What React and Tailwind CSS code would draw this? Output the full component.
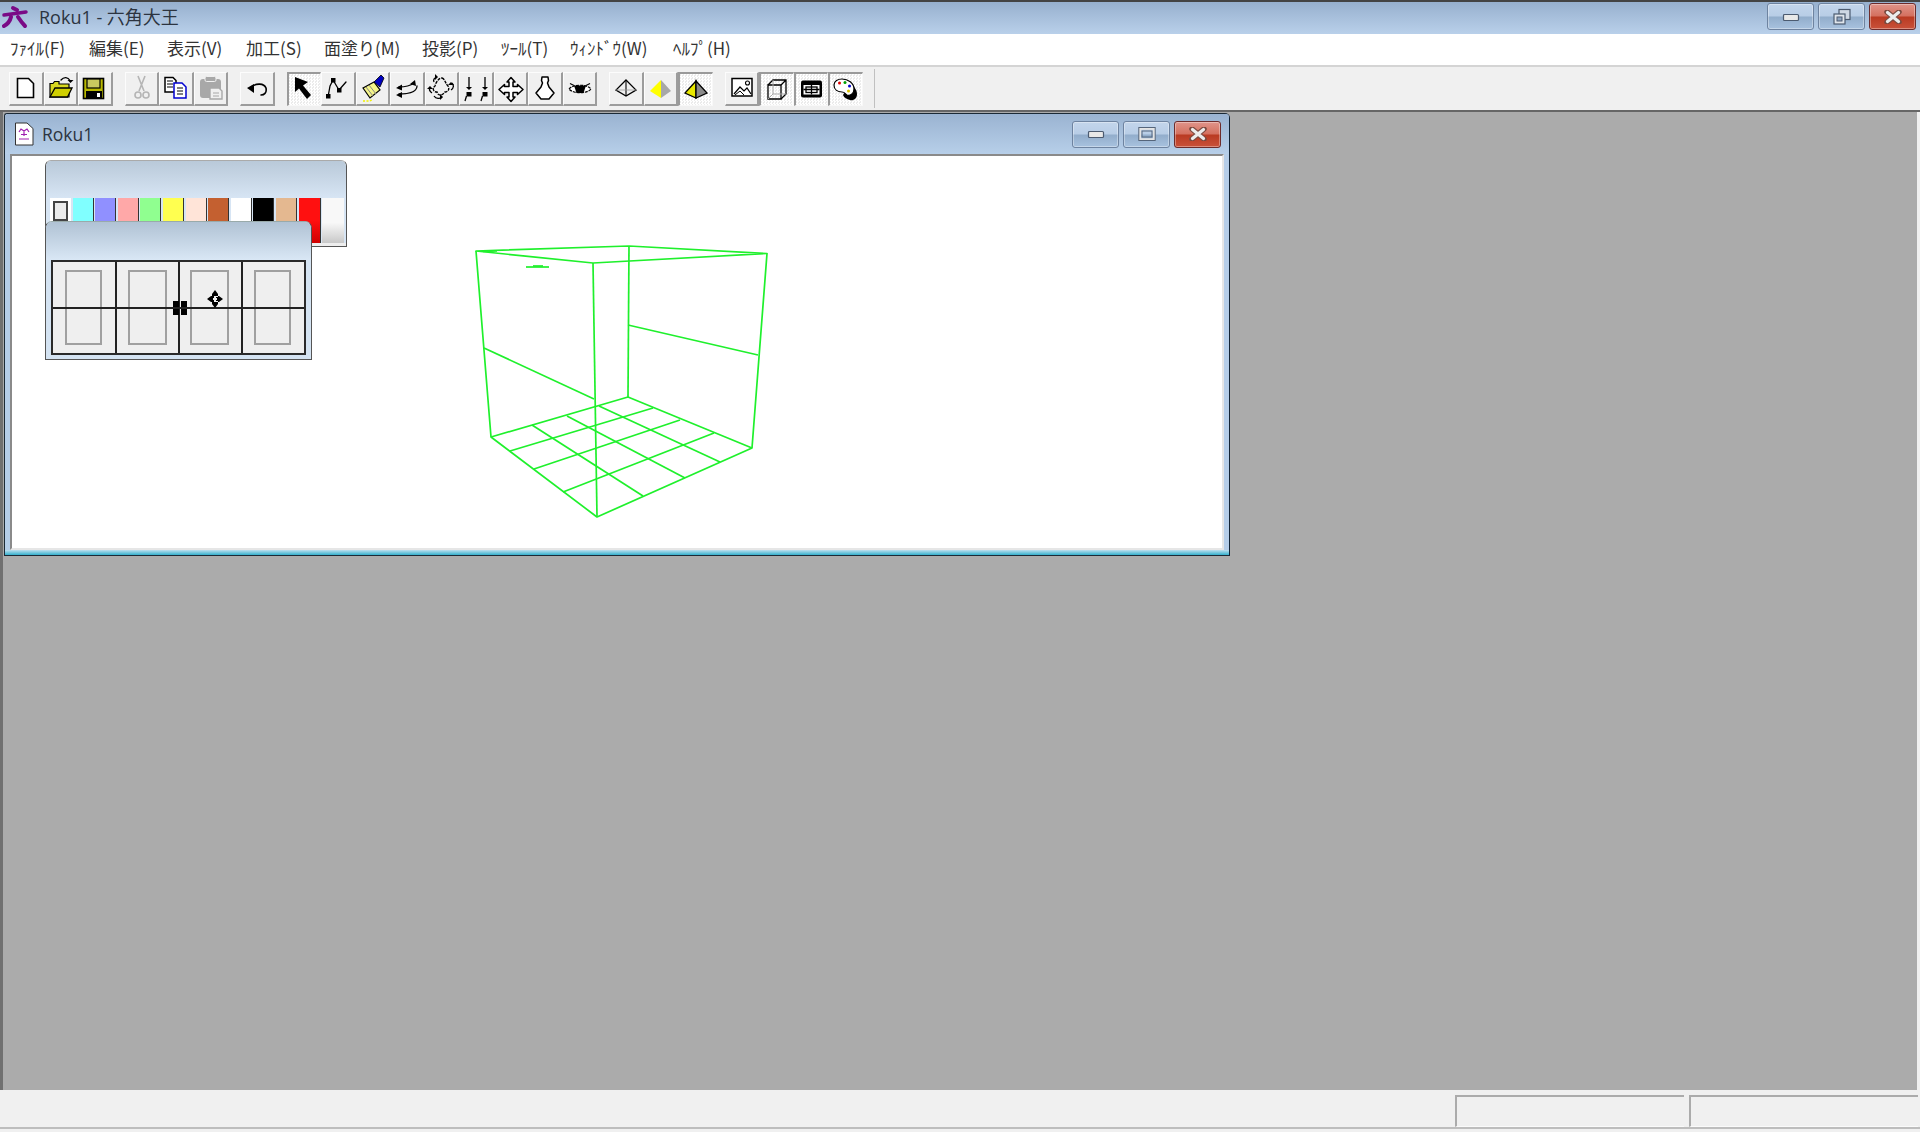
const K = { fill: "none", stroke: "#000", strokeWidth: 1.6, strokeLinejoin: "round", strokeLinecap: "round" };

function ArrowHead({ x, y, d = "d" }) {
  const p = { d: `M${x - 3} ${y - 3}L${x} ${y}L${x + 3} ${y - 3}Z`, u: `M${x - 3} ${y + 3}L${x} ${y}L${x + 3} ${y + 3}Z`, l: `M${x + 3} ${y - 3}L${x} ${y}L${x + 3} ${y + 3}Z`, r: `M${x - 3} ${y - 3}L${x} ${y}L${x - 3} ${y + 3}Z` }[d];
  return <path d={p} fill="#000" />;
}

const icons = {
  newDoc: <path d="M8.5 5.5H19.5L24.5 10.5V24.5H8.5Z" fill="#fff" stroke="#000" strokeWidth="1.6" />,
  open: (
    <>
      <path d="M6 24V10.5H9L10.5 8.5H15V11H25V24Z" fill="#d8d820" stroke="#000" strokeWidth="1.2" />
      <path d="M6 24L11 15H28L23.5 24Z" fill="#cfcf00" stroke="#000" strokeWidth="1.3" />
      <path d="M17 7C20 3.5 24 4 26 7.5" {...K} strokeWidth="1.3" />
      <ArrowHead x={26.5} y={10} />
    </>
  ),
  save: (
    <>
      <rect x="5.5" y="5.5" width="20" height="20" fill="#b8b800" stroke="#000" strokeWidth="1.6" />
      <rect x="9" y="6" width="13" height="9" fill="#c8c860" stroke="#000" strokeWidth="1.2" />
      <rect x="8" y="18" width="16" height="7.5" fill="#000" />
      <rect x="19" y="20" width="3" height="4" fill="#fff" />
    </>
  ),
  cut: (
    <g fill="none" stroke="#b5b5b5" strokeWidth="1.6">
      <path d="M13 3L19 18M20 3L14 18" />
      <circle cx="13" cy="22" r="3" />
      <circle cx="21" cy="22" r="3" />
    </g>
  ),
  copy: (
    <>
      <path d="M6 4.5H14L17 7.5V19H6Z" fill="#fff" stroke="#000" strokeWidth="1.5" />
      <path d="M8 8H14M8 11H14M8 14H14" stroke="#000" strokeWidth="1" />
      <path d="M15 10H23L27 14V25H15Z" fill="#fff" stroke="#0000d0" strokeWidth="1.5" />
      <path d="M18 15H24M18 18H24M18 21H24" stroke="#000" strokeWidth="1" />
    </>
  ),
  paste: (
    <>
      <rect x="6" y="6" width="21" height="19" rx="3" fill="#a8a8a8" />
      <rect x="11" y="3.5" width="11" height="5" rx="1.5" fill="#a8a8a8" stroke="#f0f0f0" strokeWidth="1" />
      <path d="M16 15H25L28 18V26H16Z" fill="#f0f0f0" stroke="#a8a8a8" strokeWidth="1.4" />
      <path d="M19 20H25M19 23H25" stroke="#a8a8a8" strokeWidth="1" />
    </>
  ),
  undo: (
    <>
      <path d="M11 14C16 10 24 10 26 15C27 20 24 22 21 22" {...K} strokeWidth="1.6" />
      <path d="M7 15L14 11V20Z" fill="#000" />
    </>
  ),
  arrow: <path d="M7 3L7 18L11 14.500L19 25L23 21L15 11.500L20 8Z" fill="#000" />,
  path: (
    <>
      <path d="M7 24L9 13L12 7L18 17L25 9" {...K} strokeWidth="1.3" />
      <rect x="5" y="21" width="4.5" height="4.5" fill="#000" />
      <rect x="10" y="5" width="4.5" height="4.5" fill="#000" />
      <rect x="16" y="15" width="4.5" height="4.5" fill="#000" />
    </>
  ),
  brush: (
    <>
      <path d="M7 15L18 9L24 17L14 25Z" fill="#f4f48a" stroke="#000" strokeWidth="1.200" />
      <path d="M10 14L17 23M13 12L20 21" stroke="#888" strokeWidth="1" />
      <path d="M18 9L25 2L28 5L24 14Z" fill="#0000c0" stroke="#000" strokeWidth="0.8" />
      <path d="M7 28H14M14 28L17 26" stroke="#f0f000" strokeWidth="1.4" strokeDasharray="2 1.5" />
    </>
  ),
  swap: (
    <>
      <path d="M9 14C14 14 20 13 24 10" {...K} strokeWidth="1.3" />
      <path d="M9 21C16 21 27 20 27 13" {...K} strokeWidth="1.3" />
      <path d="M6 15L12 11.500L12 17.500Z M25 7L26 13L20 11Z M6 22L12 19L12 25Z" fill="#000" />
    </>
  ),
  rotate: (
    <>
      <path d="M17 5C20 6 20 10 23 13C25 16 23 19 20 19C17 23 13 23 12 19C8 19 7 15 10 13C11 9 14 5 17 5Z" fill="none" stroke="#000" strokeWidth="1.400" strokeDasharray="3 1" />
      <path d="M9 9C8 7 9 5 12 4M26 17C29 15 29 12 27 10M9 23C11 26 15 26 17 24M7 20C4 18 4 16 5 14" fill="none" stroke="#000" strokeWidth="1.300" />
      <ArrowHead x={13} y={4} d="r" />
      <ArrowHead x={26} y={9} d="u" />
      <ArrowHead x={18} y={24} d="r" />
      <ArrowHead x={5} y={13} d="u" />
    </>
  ),
  twist: (
    <>
      <path d="M10 4V15M26 4V15" stroke="#000" strokeWidth="1.3" />
      <ArrowHead x={10} y={17} />
      <ArrowHead x={26} y={17} />
      <rect x="7.500" y="19" width="5" height="4.500" fill="#000" />
      <rect x="23.500" y="19" width="5" height="4.500" fill="#000" />
      <path d="M7.500 23L6 28M23.500 23L22 28" stroke="#000" strokeWidth="1.3" />
    </>
  ),
  move: <path d="M17 4.500L21 9H19V13.500H23.500V11.500L29 16.500L23.500 21.500V19.500H19V24H21L17 28.500L13 24H15V19.500H10.500V21.500L5 16.500L10.500 11.500V13.500H15V9H13Z" fill="#fff" stroke="#000" strokeWidth="1.500" strokeLinejoin="round" />,
  pear: <path d="M14 4H20L20.500 7.500L19.500 10L21 14L26 20L21 26H13L8 20L13 14L14.500 10L13.500 7.500Z" fill="#fff" stroke="#000" strokeWidth="1.500" strokeLinejoin="round" />,
  eye: (
    <>
      <path d="M6 16C10 11 24 11 28 16C24 21 10 21 6 16Z" fill="#fff" stroke="#000" strokeWidth="1.200" strokeDasharray="3 1" />
      <path d="M11 12.500H23L20.500 20H13.500Z" fill="#000" />
      <path d="M7 10.500L11 12.500M27 10.500L23 12.500" stroke="#000" strokeWidth="1.200" />
    </>
  ),
  pyrWire: (
    <>
      <path d="M17 7L27 17L17 23L7 17Z" fill="none" stroke="#000" strokeWidth="1.300" />
      <path d="M17 7V23" stroke="#000" strokeWidth="1.100" />
      <path d="M7 17L27 17" stroke="#999" strokeWidth="0.8" />
    </>
  ),
  pyrSolid: (
    <>
      <path d="M17 7L6 18L17 25Z" fill="#ffff00" />
      <path d="M17 7L27 18L17 25Z" fill="#a8a8a8" />
    </>
  ),
  pyrOutline: (
    <>
      <path d="M17 7L6 19L17 24Z" fill="#e8e800" stroke="#000" strokeWidth="1.300" />
      <path d="M17 7L28 19L17 24Z" fill="#8a8a8a" stroke="#000" strokeWidth="1.300" />
    </>
  ),
  image: (
    <>
      <rect x="7" y="5.5" width="20" height="17.500" fill="#fff" stroke="#000" strokeWidth="1.500" />
      <path d="M9 21L15 14L19 18L22 15L26 21" fill="none" stroke="#000" strokeWidth="1.200" />
      <path d="M10 22L15 18L19 22" fill="none" stroke="#000" strokeWidth="1" />
      <circle cx="22.500" cy="10" r="2" fill="none" stroke="#000" strokeWidth="1.100" />
    </>
  ),
  cube: (
    <>
      <path d="M8 11H21V25H8Z" fill="none" stroke="#000" strokeWidth="1.300" />
      <path d="M8 11L13 6H26V20L21 25M21 11L26 6" fill="none" stroke="#000" strokeWidth="1.300" />
      <path d="M13 6V20H26M13 20L8 25" fill="none" stroke="#aaa" strokeWidth="1" />
    </>
  ),
  table: (
    <>
      <rect x="6" y="6.500" width="21" height="17" rx="2" fill="#000" />
      <rect x="8.500" y="11" width="16" height="9.500" fill="#fff" />
      <rect x="11" y="13" width="11" height="5.500" fill="none" stroke="#000" strokeWidth="1.300" />
      <path d="M16.500 11V20.500M8.500 15.500H24.500" stroke="#000" strokeWidth="1.300" />
    </>
  ),
  palette: (
    <>
      <path d="M20 10C24 11 28 15 28 20C28 25 24 27 21 26C18 25 15 24 14 21Z" fill="#000" />
      <path d="M13 5C19 5 25 9 25 15C25 20 21 22 18 21C16 20 16 18 13 18C9 18 5 16 5 11C5 7 9 5 13 5Z" fill="#fff" stroke="#000" strokeWidth="1.200" />
      <circle cx="10.500" cy="9" r="1.500" fill="#e00000" />
      <circle cx="16" cy="8.500" r="1.500" fill="#00a000" />
      <circle cx="20.500" cy="12" r="1.500" fill="#0000d0" />
      <circle cx="19.500" cy="17" r="1.500" fill="#d8c000" />
    </>
  ),
};

const toolbar = [
  [["newDoc"], ["open"], ["save"]],
  [["cut"], ["copy"], ["paste"]],
  [["undo"]],
  [["arrow", 1], ["path"], ["brush"], ["swap"], ["rotate"], ["twist"], ["move"], ["pear"], ["eye"]],
  [["pyrWire"], ["pyrSolid"], ["pyrOutline", 1]],
  [["image"], ["cube", 1], ["table", 1], ["palette", 1]],
];

function ToolButton({ name, pressed }) {
  const cls = pressed
    ? "border-t-2 border-l-2 border-t-[#9a9a9a] border-l-[#9a9a9a] border-b-[#f8f8f8] border-r-[#f8f8f8] border-b border-r bg-[repeating-conic-gradient(#ffffff_0_25%,#ebebeb_0_50%)] bg-[length:3px_3px]"
    : "border-b-2 border-r-2 border-t border-l border-t-[#fcfcfc] border-l-[#fcfcfc] border-b-[#9c9c9c] border-r-[#9c9c9c] bg-[#f0f0f0]";
  return (
    <div className={`w-[34.5px] h-[34px] box-border relative ${cls}`}>
      <svg viewBox="0 0 34 33" className="absolute left-[-1px] top-0 w-[34px] h-[33px]">
        {icons[name]}
      </svg>
    </div>
  );
}

function Glyph({ type }) {
  if (type === "min")
    return (
      <svg width="20" height="10" viewBox="0 0 20 10">
        <rect x="2.500" y="2.500" width="15" height="6" rx="1" fill="#e8e8e8" stroke="#4c5b70" strokeWidth="1.200" />
      </svg>
    );
  if (type === "max")
    return (
      <svg width="18" height="14" viewBox="0 0 18 14">
        <rect x="2" y="1.500" width="14" height="11" fill="none" stroke="#e4e4e4" strokeWidth="2.500" />
        <rect x="0.800" y="0.500" width="16.400" height="13" fill="none" stroke="#55657b" strokeWidth="1" />
        <rect x="4" y="4" width="10" height="6" fill="none" stroke="#55657b" strokeWidth="1" />
      </svg>
    );
  if (type === "restore")
    return (
      <svg width="20" height="18" viewBox="0 0 20 18">
        <rect x="7" y="1.500" width="11" height="10" fill="#cfd8e4" stroke="#4c5b70" strokeWidth="1.200" />
        <rect x="2" y="6" width="11" height="10" fill="#dfe5ec" stroke="#4c5b70" strokeWidth="1.200" />
        <rect x="5" y="9" width="5" height="4" fill="#8ea4bf" stroke="#4c5b70" strokeWidth="1" />
      </svg>
    );
  return (
    <svg width="20" height="14" viewBox="0 0 20 14">
      <path d="M4 2L16 12M16 2L4 12" stroke="#7b4a40" strokeWidth="5.500" strokeLinecap="round" />
      <path d="M4.500 2.500L15.500 11.500M15.500 2.500L4.500 11.500" stroke="#ececec" strokeWidth="3.200" strokeLinecap="round" />
    </svg>
  );
}

function WinButton({ type }) {
  const cls =
    type === "close"
      ? "border-[#6d2c2c] bg-[linear-gradient(#e0948a_0%,#d4705f_48%,#b93a22_52%,#c9513a_100%)]"
      : "border-[#6e83a0] bg-[linear-gradient(#c3d5eb_0%,#b8cde6_48%,#92adcb_52%,#a8c2df_100%)]";
  return (
    <div className={`w-[47px] h-[27px] box-border border rounded-[3px] flex items-center justify-center shadow-[inset_0_0_0_1px_rgba(255,255,255,0.35)] ${cls}`}>
      <Glyph type={type} />
    </div>
  );
}

const menus = [
  ["ﾌｧｲﾙ(F)", "w-[79px]"],
  ["編集(E)", "w-[78px]"],
  ["表示(V)", "w-[79px]"],
  ["加工(S)", "w-[78px]"],
  ["面塗り(M)", "w-[98px]"],
  ["投影(P)", "w-[79px]"],
  ["ﾂｰﾙ(T)", "w-[69px]"],
  ["ｳｨﾝﾄﾞｳ(W)", "w-[103px]"],
  ["ﾍﾙﾌﾟ(H)", "w-[80px]"],
];

const swatches = ["#80ffff", "#9090ff", "#ffa8a8", "#90ff90", "#ffff50", "#ffe4d8", "#c46030", "#ffffff", "#000000", "#e4b890"];

function Palette() {
  return (
    <div className="absolute left-[33px] top-[4px] w-[302px] h-[87px] box-border border border-[#555] border-t-[#aaa] rounded-t-[6px] bg-[#eeeeee] flex flex-col">
      <div className="h-[37px] rounded-t-[5px] bg-[linear-gradient(#b9c9d9,#d7e5f4)]" />
      <div className="flex h-[45px] pl-[4px] gap-[1.6px] bg-[#d7e5f4]">
        <div className="w-[21px] h-[45px] bg-white pl-[3px] pt-[3px]">
          <div className="w-[15px] h-[20px] border-2 border-[#444] bg-[#ebebeb]" />
        </div>
        {swatches.map((c, i) => (
          <div key={i} className="w-[21px] h-[45px] border-r border-[#333]" style={{ background: c }} />
        ))}
        <div className="w-[22px] h-[45px] bg-[linear-gradient(#ff1010_50%,#d00000_100%)] border-r border-[#333]" />
        <div className="w-[22px] h-[45px] bg-[linear-gradient(#f8f8f8_55%,#c8c8c8_100%)]" />
      </div>
    </div>
  );
}

function Cell({ w, rectLeft, rectW, edge }) {
  return (
    <div className={`relative h-full box-border border-[#222] ${edge ? "" : "border-r-2"} ${w}`}>
      <div className={`absolute top-[8px] bottom-[8px] border-2 border-[#a0a0a0] ${rectLeft} ${rectW}`} />
    </div>
  );
}

function ViewPanel() {
  return (
    <div className="absolute left-[33px] top-[65px] w-[267px] h-[139px] box-border border border-[#555] border-t-[#9aa] rounded-t-[7px] bg-[#d4e3f2] flex flex-col">
      <div className="h-[38px] rounded-t-[6px] bg-[linear-gradient(#b0c2d4,#d9e7f5)]" />
      <div className="relative mx-[5px] h-[95px] box-border border-2 border-[#2a2a2a] bg-[#efefef] flex">
        <Cell w="w-[64px]" rectLeft="left-[12px]" rectW="w-[37px]" />
        <Cell w="w-[64px]" rectLeft="left-[11px]" rectW="w-[39px]" />
        <Cell w="w-[63px]" rectLeft="left-[10px]" rectW="w-[39px]" />
        <Cell w="w-[62px]" rectLeft="left-[11px]" rectW="w-[37px]" edge />
        <div className="absolute left-0 right-0 top-[45px] h-[2px] bg-[#222]" />
        <svg viewBox="0 0 14 14" className="absolute left-[120px] top-[39px] w-[14px] h-[14px]">
          <path d="M0 0H6V6H0ZM8 0H14V6H8ZM0 8H6V14H0ZM8 8H14V14H8Z" fill="#000" />
        </svg>
        <svg viewBox="0 0 16 18" className="absolute left-[154px] top-[28px] w-[16px] h-[18px]">
          <path d="M8 0L11 4H5ZM8 18L5 14H11ZM0 9L4 6V12ZM16 9L12 12V6Z" fill="#000" />
          <path d="M5 4H11V7H9V6H7V7H5ZM4 6H7V8H6V10H7V12H4ZM12 6H9V8H10V10H9V12H12ZM5 14V11H7V12H9V11H11V14Z" fill="#000" />
        </svg>
      </div>
    </div>
  );
}

function Wireframe() {
  const lines = [
    "M476 250L629 245L767 252.500L593 262Z",
    "M476 250L491 436L597 516L752 447L767 252.500",
    "M593 262L597 516",
    "M629 245L628 396",
    "M484 347L594 398",
    "M628 324L758 354",
    "M491 436L628 396L752 447",
    "M510 450L653 407",
    "M534 468L680 419",
    "M563 491L714 432",
    "M532 424L643 495",
    "M567 415L685 477",
    "M599 405L720 461",
    "M483 250.500L497 250",
    "M526 266L549 266",
    "M533 265L543 265",
  ];
  return (
    <svg viewBox="470 240 300 280" className="absolute left-[458px] top-[85px] w-[300px] h-[280px]">
      {lines.map((d, i) => (
        <path key={i} d={d} fill="none" stroke="#1ff02c" strokeWidth="1.700" strokeLinejoin="round" />
      ))}
    </svg>
  );
}

function Logo() {
  return (
    <svg viewBox="0 0 26 24" className="w-[26px] h-[24px] ml-[1px] shrink-0">
      <g fill="none" stroke="#7a0a86" strokeLinecap="round">
        <path d="M11 3L15 5" strokeWidth="4" />
        <path d="M2 10L24 7" strokeWidth="3.500" />
        <path d="M9 12C8 16 6 19 2 21" strokeWidth="4" />
        <path d="M16 12C18 15 20 18 23 21" strokeWidth="4" />
      </g>
    </svg>
  );
}

function DocIcon() {
  return (
    <svg viewBox="0 0 20 24" className="w-[20px] h-[24px] shrink-0">
      <path d="M1.500 1H13L19 6.500V23H1.500Z" fill="#fff" stroke="#333" strokeWidth="1" />
      <path d="M5 10L7 7L10 9L13 7L15 10M10 9V14M7 12.500H13M5 17H15" fill="none" stroke="#a020b0" strokeWidth="1.200" />
    </svg>
  );
}

export default function App() {
  return (
    <div className="w-[1920px] h-[1132px] overflow-hidden flex flex-col bg-[#f0f0f0] font-['Noto_Sans_CJK_JP','Noto_Sans',sans-serif] text-[#222]">
      <div className="h-[34px] shrink-0 border-t-2 border-[#444] bg-[linear-gradient(#97b0ce,#b9d0ea)] flex items-center pl-[1px] pr-[4px] pb-[3px]">
        <Logo />
        <span className="ml-[11px] text-[18px] leading-none text-[#2c3440] font-['Open_Sans','Noto_Sans_CJK_JP',sans-serif]">Roku1 - 六角大王</span>
        <div className="ml-auto flex gap-[4px]">
          <WinButton type="min" />
          <WinButton type="restore" />
          <WinButton type="close" />
        </div>
      </div>
      <div className="h-[31px] shrink-0 bg-white flex items-center pl-[10px] pb-[4px] text-[17px] leading-none text-[#333]">
        {menus.map(([t, w]) => (
          <span key={t} className={`${w} shrink-0`}>{t}</span>
        ))}
      </div>
      <div className="h-[45px] shrink-0 border-t-2 border-[#d4d4d4] border-b-0 bg-[#f0f0f0] flex items-start pt-[5px] pl-[9px]">
        {toolbar.map((g, i) => (
          <div key={i} className="flex mr-[12px]">
            {g.map(([n, p]) => (
              <ToolButton key={n} name={n} pressed={p} />
            ))}
          </div>
        ))}
        <div className="w-[1px] h-[39px] -mt-[3px] -ml-[1px] bg-[#c0c0c0]" />
      </div>
      <div className="h-[2px] shrink-0 bg-[#666]" />
      <div className="h-[978px] shrink-0 border-l-[3px] border-l-[#707070] mr-[3px] bg-[#ababab] pl-[1px] pt-[1px]">
        <div className="w-[1226px] h-[443px] box-border border-[1.500px] border-[#1c2a36] rounded-tr-[5px] rounded-tl-[3px] bg-[#b5cde8] border-r-[#123] flex flex-col">
          <div className="h-[40px] shrink-0 rounded-t-[3px] bg-[linear-gradient(#9ab3d1,#b7cfe9)] flex items-center pl-[9px] pr-[8px]">
            <DocIcon />
            <span className="ml-[8px] mt-[2px] text-[17.500px] leading-none text-[#2c3440] font-['Open_Sans',sans-serif]">Roku1</span>
            <div className="ml-auto flex gap-[4px]">
              <WinButton type="min" />
              <WinButton type="max" />
              <WinButton type="close" />
            </div>
          </div>
          <div className="relative flex-1 mx-[5px] box-border border-l-2 border-t-2 border-[#8a8a8a] border-r-2 border-r-[#e6e6e6] border-b-2 border-b-[#e6e6e6] bg-white">
            <Palette />
            <ViewPanel />
            <Wireframe />
          </div>
          <div className="h-[5px] shrink-0 bg-[linear-gradient(#bfe0f0,#34b0cc)]" />
        </div>
      </div>
      <div className="flex-1 flex flex-col">
        <div className="h-[5px] shrink-0" />
        <div className="h-[32px] shrink-0 flex justify-end pr-[2px] gap-[5px]">
          <div className="w-[229px] box-border border-t-2 border-l-2 border-[#ababab] border-b border-b-[#fafafa]" />
          <div className="w-[229px] box-border border-t-2 border-l-2 border-[#ababab] border-b border-b-[#fafafa]" />
        </div>
        <div className="h-[2px] shrink-0 bg-[#bdbdbd]" />
      </div>
    </div>
  );
}
